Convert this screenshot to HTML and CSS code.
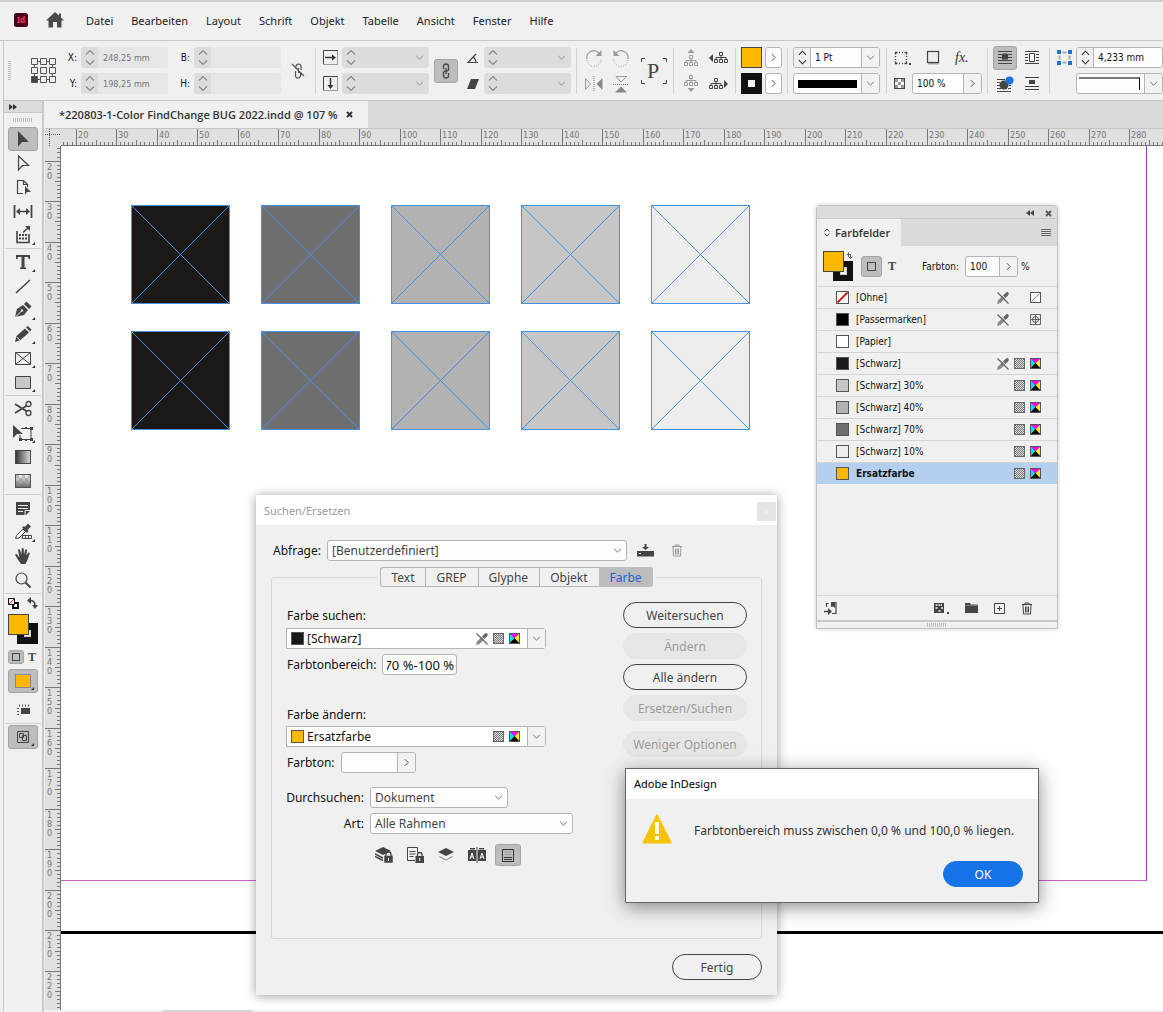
FILE: index.html
```html
<!DOCTYPE html>
<html lang="de">
  <head>
    <meta charset="UTF-8" />
    <title>InDesign</title>
    <link rel="stylesheet" href="styles.css" />
  </head>
  <body>
    <svg class="sprite">
      <symbol id="down" viewBox="0 0 10 6"><path d="M1 1l4 4 4-4" fill="none" stroke="currentColor" stroke-width="1.1" /></symbol>
      <symbol id="right" viewBox="0 0 6 10"><path d="M1 1l4 4-4 4" fill="none" stroke="currentColor" stroke-width="1.1" /></symbol>
      <symbol id="step" viewBox="0 0 17 21"><path d="M5 7.500l4-4 4 4M5 13.500l4 4 4-4" fill="none" stroke="currentColor" stroke-width="1.200" /></symbol>
      <symbol id="nopen" viewBox="0 0 12 12"><path d="M0 12l1-3.500L5.500 4l2.500 2.500L3.500 11z" fill="#888" /><path d="M6 3.500L9 .5q2-1 2.500.5 .8 1-.5 2.500L8.500 6z" fill="#666" /><path d="M.5.5l11 11" stroke="#666" stroke-width="1.300" /></symbol>
      <symbol id="tint" viewBox="0 0 11 11"><rect width="11" height="11" fill="#666" /><rect x="1" y="1" width="9" height="9" fill="url(#dots)" /></symbol>
      <symbol id="cmyk" viewBox="0 0 11 11"><rect width="11" height="11" fill="#555" /><path d="M1 1h9L5.500 5.500z" fill="#f0e" /><path d="M1 1v9l4.500-4.500z" fill="#0df" /><path d="M10 1v9L5.500 5.500z" fill="#fe1" /><path d="M1 10h9L5.500 5z" fill="#000" /></symbol>
      <symbol id="trash" viewBox="0 0 12 13"><path d="M1 2.500h10M4 2.500v-1.500h4v1.500M2 3l.5 9h7l.5-9M4.500 4.500v6M6 4.500v6M7.500 4.500v6" fill="none" stroke="currentColor" /></symbol>
      <symbol id="tree" viewBox="0 0 14 11"><path d="M5.500.5h3v3h-3zM.5 7.500h3v3h-3zM5.500 7.500h3v3h-3zM10.500 7.500h3v3h-3zM7 3.500v4M2 7.500v-2h10v2" fill="none" stroke="currentColor" /></symbol>
      <defs>
        <pattern id="dots" width="2" height="2" patternUnits="userSpaceOnUse"><rect width="2" height="2" fill="#ddd" /><path d="M0 0h1v1H0zM1 1h1v1H1z" fill="#777" /></pattern>
        <linearGradient id="fade"><stop offset="0" stop-color="#333" /><stop offset="1" stop-color="#ddd" /></linearGradient>
        <linearGradient id="fadeDown" x2="0" y2="1"><stop offset="0" stop-color="#fff" /><stop offset="1" stop-color="#666" /></linearGradient>
      </defs>
    </svg>

    <header class="menubar">
      <svg class="logo" width="14" height="14" viewBox="0 0 14 14"><rect width="14" height="14" rx="2.500" fill="#49021f" /><text x="3" y="10" class="logo-text">Id</text></svg>
      <svg class="home" width="18" height="16" viewBox="0 0 18 16"><path d="M9 0L0 8.500h2.500V15.500h4.500V10h4v5.500h4.500V8.500H18l-3-3V1.500h-2v2z" fill="#4b4b4b" /></svg>
      <nav class="menu">
        <a href="#">Datei</a><a href="#">Bearbeiten</a><a href="#">Layout</a><a href="#">Schrift</a><a href="#">Objekt</a><a href="#">Tabelle</a><a href="#">Ansicht</a><a href="#">Fenster</a><a href="#">Hilfe</a>
      </nav>
    </header>

    <div class="controlbar">
      <div class="grip-v"></div>
      <svg class="refpoint" width="26" height="26" viewBox="0 0 26 26"><path d="M3.500 3.500h18v18h-18z" fill="none" stroke="#555" /><g fill="#f0f0f0" stroke="#555"><path d="M.5.5h6v6h-6zM9.500.5h6v6h-6zM18.500.5h6v6h-6zM.5 9.500h6v6h-6zM9.500 9.500h6v6h-6zM18.500 9.500h6v6h-6zM9.500 18.500h6v6h-6zM18.500 18.500h6v6h-6z" /><path d="M.5 18.500h6v6h-6z" fill="#444" /></g></svg>

      <div class="pair pair-pos">
        <label for="posX">X:</label>
        <div class="field light"><svg class="step"><use href="#step" /></svg><input id="posX" value="248,25 mm" disabled /></div>
        <label for="posB">B:</label>
        <div class="field light"><svg class="step"><use href="#step" /></svg><input id="posB" disabled /></div>
        <label for="posY">Y:</label>
        <div class="field light"><svg class="step"><use href="#step" /></svg><input id="posY" value="198,25 mm" disabled /></div>
        <label for="posH">H:</label>
        <div class="field light"><svg class="step"><use href="#step" /></svg><input id="posH" disabled /></div>
      </div>
      <svg class="unlink" width="16" height="18" viewBox="0 0 16 18"><path d="M6 7V4.500a2.500 2.500 0 0 1 5 0V8M5.500 9v4.500a2.500 2.500 0 0 0 5 0V11M8.500 6v5M2 2l12 12" fill="none" stroke="#555" stroke-width="1.200" /></svg>
      <div class="sep"></div>

      <div class="pair pair-scale">
        <svg width="15" height="15" viewBox="0 0 15 15"><path d="M14.500.5H.5v14" fill="none" stroke="#444" /><path d="M14.500.5v14H.5" fill="none" stroke="#444" stroke-dasharray="1 1" /><path d="M2 7.500h9" stroke="#333" stroke-width="1.500" /><path d="M9 4.500l4 3-4 3z" fill="#333" /></svg>
        <div class="field off"><svg class="step"><use href="#step" /></svg><input aria-label="Skalierung X" disabled /><svg class="chev"><use href="#down" /></svg></div>
        <svg width="15" height="15" viewBox="0 0 15 15"><path d="M.5 14.500V.5h14" fill="none" stroke="#444" /><path d="M14.500.5v14H.5" fill="none" stroke="#444" stroke-dasharray="1 1" /><path d="M7.500 2v9" stroke="#333" stroke-width="1.500" /><path d="M4.500 9l3 4 3-4z" fill="#333" /></svg>
        <div class="field off"><svg class="step"><use href="#step" /></svg><input aria-label="Skalierung Y" disabled /><svg class="chev"><use href="#down" /></svg></div>
      </div>
      <button class="toggle link" aria-label="Verketten"><svg width="10" height="16" viewBox="0 0 10 16"><path d="M2.500 6V3.500a2.500 2.500 0 0 1 5 0V6.500a2 2 0 0 1-2.500 1.500M7.500 10v2.500a2.500 2.500 0 0 1-5 0V9.500A2 2 0 0 1 5 8M5 5v6" fill="none" stroke="#444" stroke-width="1.300" /></svg></button>

      <div class="pair pair-angle">
        <svg width="14" height="12" viewBox="0 0 14 12"><path d="M12 10.500H2L10 2M7 5q3 2 3 5.500" fill="none" stroke="#444" stroke-width="1.200" /></svg>
        <div class="field off"><svg class="step"><use href="#step" /></svg><input aria-label="Drehwinkel" disabled /><svg class="chev"><use href="#down" /></svg></div>
        <svg width="14" height="12" viewBox="0 0 14 12"><path d="M5 1h8L9 11H1z" fill="#444" /></svg>
        <div class="field off"><svg class="step"><use href="#step" /></svg><input aria-label="Scherwinkel" disabled /><svg class="chev"><use href="#down" /></svg></div>
      </div>
      <div class="sep"></div>

      <div class="pair pair-rotate">
        <svg width="18" height="18" viewBox="0 0 18 18"><path d="M2 10A7 7 0 0 1 14 4" fill="none" stroke="#999" stroke-width="1.200" /><path d="M16.500 1v6h-6z" fill="#999" /><path d="M2 11a7 7 0 0 0 14-1" fill="none" stroke="#999" stroke-dasharray="1 1.500" /></svg>
        <svg width="18" height="18" viewBox="0 0 18 18"><path d="M16 10A7 7 0 0 0 4 4" fill="none" stroke="#999" stroke-width="1.200" /><path d="M1.500 1v6h6z" fill="#999" /><path d="M16 11a7 7 0 0 1-14-1" fill="none" stroke="#999" stroke-dasharray="1 1.500" /></svg>
        <svg width="18" height="16" viewBox="0 0 18 16"><path d="M.5 2.500v11l5-5.500z" fill="none" stroke="#999" /><path d="M9 0v16" stroke="#777" stroke-dasharray="1 1" /><path d="M17.500 2v12l-6-6z" fill="#888" /></svg>
        <svg width="18" height="18" viewBox="0 0 18 18"><path d="M4 1.500h10.500L9 7z" fill="none" stroke="#999" /><path d="M1 9.500h16" stroke="#777" stroke-dasharray="1 1" /><path d="M3 17.500h12l-6-6z" fill="#888" /></svg>
      </div>
      <svg class="para" width="26" height="26" viewBox="0 0 26 26"><path d="M.5 4V.5H4M22 .5h3.500V4M.5 22v3.500H4M22 25.500h3.500V22" fill="none" stroke="#444" /><text x="6" y="20" class="para-text">P</text></svg>
      <div class="sep"></div>

      <div class="pair pair-tree">
        <svg class="dim" width="14" height="17" viewBox="0 0 14 17"><path d="M3.500 4L7 0l3.500 4z" fill="currentColor" /><use href="#tree" y="6" width="14" height="11" /></svg>
        <svg class="dark" width="19" height="12" viewBox="0 0 19 12"><path d="M4 2v8L0 6z" fill="currentColor" /><use href="#tree" x="5" width="14" height="11" /></svg>
        <svg class="dim" width="14" height="17" viewBox="0 0 14 17"><use href="#tree" width="14" height="11" /><path d="M3.500 13L7 17l3.500-4z" fill="currentColor" /></svg>
        <svg class="dark" width="19" height="12" viewBox="0 0 19 12"><use href="#tree" width="14" height="11" /><path d="M15 2v8l4-4z" fill="currentColor" /></svg>
      </div>
      <div class="sep"></div>

      <div class="pair pair-color">
        <div class="fillbox"></div><button class="small-btn" aria-label="Fläche"><svg class="right"><use href="#right" /></svg></button>
        <div class="strokebox"></div><button class="small-btn" aria-label="Kontur"><svg class="right"><use href="#right" /></svg></button>
      </div>
      <div class="sep"></div>

      <div class="pair pair-stroke">
        <div class="field on"><svg class="step"><use href="#step" /></svg><input aria-label="Konturstärke" value="1 Pt" /><span class="drop"><svg class="chev"><use href="#down" /></svg></span></div>
        <div class="field on"><span class="line-sample"><i></i></span><span class="drop"><svg class="chev"><use href="#down" /></svg></span></div>
      </div>
      <div class="sep"></div>

      <div class="pair pair-fx">
        <div class="fx-row">
          <svg width="17" height="14" viewBox="0 0 17 14"><path d="M5 1.500h1M8 1.500h1M5 12.500h1M8 12.500h1M1.500 5v1M1.500 8v1M12.500 5v1M12.500 8v1M1.500 3.500v-2h2M10.500 1.500h2v2M1.500 10.500v2h2M10.500 12.500h2v-2" fill="none" stroke="#444" stroke-width="1.500" /><path d="M15 12h2v2h-2z" fill="#444" /></svg>
          <svg width="14" height="15" viewBox="0 0 14 15"><path d="M2 13h11v1.500H2z" fill="#aaa" /><rect x="1.500" y="1.500" width="11" height="11" fill="#eee" stroke="#444" stroke-width="1.200" /></svg>
          <span class="fx">fx.</span>
        </div>
        <div class="fx-row">
          <svg width="11" height="11" viewBox="0 0 11 11"><rect x=".5" y=".5" width="10" height="10" fill="#fff" stroke="#444" /><path d="M1 1h3v3H1zM7 1h3v3H7zM4 4h3v3H4zM1 7h3v3H1zM7 7h3v3H7z" fill="#999" /></svg>
          <div class="field on"><input aria-label="Deckkraft" value="100 %" /><span class="drop"><svg class="right"><use href="#right" /></svg></span></div>
        </div>
      </div>
      <div class="sep"></div>

      <div class="pair pair-wrap">
        <button class="toggle" aria-label="Kein Umfließen"><svg width="14" height="13" viewBox="0 0 14 13"><path d="M0 .5h14M0 3.500h14M0 6.500h14M0 9.500h14M0 12.500h14" stroke="#444" /><path d="M5 2.500h4v1h1v5H4v-5h1z" fill="#444" /></svg></button>
        <svg width="14" height="13" viewBox="0 0 14 13"><path d="M0 .5h14M0 3.500h3M0 6.500h3M0 9.500h3M11 3.500h3M11 6.500h3M11 9.500h3M0 12.500h14" stroke="#444" /><path d="M4.500 2.500h5v8h-5z" fill="#fff" stroke="#444" /></svg>
        <svg width="17" height="16" viewBox="0 0 17 16"><path d="M0 3.500h8M0 6.500h3M0 9.500h3M0 12.500h4M12 9.500h2M11 12.500h3M0 15.500h14" stroke="#444" /><circle cx="7" cy="9" r="4.500" fill="#444" /><circle cx="12.500" cy="4.500" r="4" fill="#1473e6" /></svg>
        <svg width="14" height="13" viewBox="0 0 14 13"><path d="M0 .5h14M0 9.500h14M0 12.500h14" stroke="#444" /><path d="M4 3h6v4H4z" fill="#444" /></svg>
      </div>
      <div class="sep"></div>

      <div class="pair pair-corner">
        <svg width="15" height="15" viewBox="0 0 15 15"><path d="M5.500 2.500h4M5.500 12.500h4M2.500 5.500v4M12.500 5.500v4" stroke="#aaa" stroke-width="2" /><path d="M0 0h4v4H0zM11 0h4v4h-4zM0 11h4v4H0zM11 11h4v4h-4z" fill="#1d6fd0" /></svg>
        <div class="field on"><svg class="step"><use href="#step" /></svg><input aria-label="Eckengröße" value="4,233 mm" /></div>
        <span></span>
        <div class="field on"><span class="corner-sample"><i></i></span><span class="drop"><svg class="chev"><use href="#down" /></svg></span></div>
      </div>
    </div>

    <main class="workspace">
      <aside class="tools">
        <div class="tools-head"><svg width="8" height="6" viewBox="0 0 8 6"><path d="M0 0l4 3-4 3zM4 0l4 3-4 3z" fill="#333" /></svg></div>
        <div class="grip-h"></div>
        <button class="tool active" aria-label="Auswahl"><svg width="20" height="20" viewBox="0 0 20 20"><path d="M5 2v16l4-5h7z" fill="#444" /></svg></button>
        <button class="tool" aria-label="Direktauswahl"><svg width="20" height="20" viewBox="0 0 20 20"><path d="M5.500 3v14l4-4.500h6z" fill="none" stroke="#444" stroke-width="1.200" /></svg></button>
        <button class="tool" aria-label="Seite"><svg width="20" height="20" viewBox="0 0 20 20"><path d="M10 16.500H4.500v-13h6l4 4V10M10.500 3.500v4h4" fill="none" stroke="#444" stroke-width="1.200" /><path d="M12 9v9l2-3h4z" fill="#444" /></svg></button>
        <button class="tool" aria-label="Lücke"><svg width="20" height="20" viewBox="0 0 20 20"><path d="M1.500 4v13M18.500 4v13" stroke="#444" stroke-width="1.800" /><path d="M5 10.500h10" stroke="#444" stroke-width="1.500" /><path d="M3 10.500l4-3.500v7zM17 10.500L13 7v7z" fill="#444" /></svg></button>
        <button class="tool more" aria-label="Inhaltsaufnahme"><svg width="20" height="20" viewBox="0 0 20 20"><path d="M4 6v11.500h12V9" fill="none" stroke="#444" stroke-width="1.600" /><path d="M6 9h2v2H6zM9 9h2v2H9zM12 9h2v2h-2zM6 12.500h2v2H6zM9 12.500h2v2H9zM12 12.500h2v2h-2zM12 1h5v5z" fill="#444" /><path d="M10 7.500L15 3" stroke="#444" stroke-width="1.500" /></svg></button>
        <hr />
        <button class="tool more" aria-label="Text"><svg width="20" height="20" viewBox="0 0 20 20"><path d="M3 3h14v4h-1.500L15 5h-3.500v10.500H13V17H7v-1.500h1.500V5H5l-.5 2H3z" fill="#444" /></svg></button>
        <button class="tool" aria-label="Linie"><svg width="20" height="20" viewBox="0 0 20 20"><path d="M3 17L17 4" stroke="#444" stroke-width="1.500" /></svg></button>
        <button class="tool more" aria-label="Zeichenstift"><svg width="20" height="20" viewBox="0 0 20 20"><path d="M2 17l2-8 6-4 5 5-4 5z" fill="#444" /><path d="M11 4l2.500-2.500 5 5L16 9z" fill="#444" /><path d="M2.500 17l6-6" stroke="#eee" /><circle cx="9" cy="10.500" r="1.200" fill="#eee" /></svg></button>
        <button class="tool more" aria-label="Buntstift"><svg width="20" height="20" viewBox="0 0 20 20"><path d="M2 18l1.500-6L12 4.500l4 4L7.500 16zM13 3.500L15 2l3.500 3.500L17 7.500z" fill="#444" /><path d="M3.800 13l3 3" stroke="#eee" /></svg></button>
        <button class="tool more" aria-label="Rechteckrahmen"><svg width="20" height="20" viewBox="0 0 20 20"><path d="M2.500 4.500h15v12h-15zM2.500 4.500l15 12M17.500 4.500l-15 12" fill="none" stroke="#444" /></svg></button>
        <button class="tool more" aria-label="Rechteck"><svg width="20" height="20" viewBox="0 0 20 20"><path d="M2.500 4.500h15v12h-15z" fill="#c8c8c8" stroke="#444" /></svg></button>
        <hr />
        <button class="tool" aria-label="Schere"><svg width="20" height="20" viewBox="0 0 20 20"><path d="M2 5l12 7.500M2 14l12-7.500" stroke="#444" stroke-width="1.800" /><circle cx="15.500" cy="5" r="2.500" fill="none" stroke="#444" stroke-width="1.300" /><circle cx="15.500" cy="14" r="2.500" fill="none" stroke="#444" stroke-width="1.300" /></svg></button>
        <button class="tool more" aria-label="Frei transformieren"><svg width="20" height="20" viewBox="0 0 20 20"><path d="M8 5.500h10v11H7V12" fill="none" stroke="#444" /><path d="M0 2v13l4-4h6z" fill="#444" /><path d="M17 4h3v3h-3zM17 15h3v3h-3zM6 15h3v3H6zM12 4h2v1h-2zM12 17h2v1h-2z" fill="#444" /></svg></button>
        <button class="tool" aria-label="Verlaufsfarbfeld"><svg width="20" height="20" viewBox="0 0 20 20"><rect x="2.500" y="3.500" width="15" height="13" fill="url(#fade)" stroke="#444" /></svg></button>
        <button class="tool" aria-label="Weiche Verlaufskante"><svg width="20" height="20" viewBox="0 0 20 20"><rect x="2.500" y="3.500" width="15" height="13" fill="url(#fadeDown)" stroke="#555" /><path d="M3 4h3v3H3zM9 4h3v3H9zM15 4h2v3h-2zM6 7h3v3H6zM12 7h3v3h-3zM3 10h3v3H3zM9 10h3v3H9z" fill="#888" opacity=".5" /></svg></button>
        <hr />
        <button class="tool" aria-label="Notiz"><svg width="20" height="20" viewBox="0 0 20 20"><path d="M3 4h14v9l-4 4H3z" fill="#444" /><path d="M5 7.500h10M5 10.500h10M5 13.500h5M12 17v-4.500h5" stroke="#eee" fill="none" /></svg></button>
        <button class="tool more" aria-label="Pipette"><svg width="20" height="20" viewBox="0 0 20 20"><path d="M2.500 16.500l1-3L10 7l2.500 2.500L6 16z" fill="none" stroke="#444" /><path d="M9 5.500L11 4l1 1 3-3.500 3 3L14.500 8l1 1-1.500 2z" fill="#444" /><path d="M9.500 13.500h9v3h-9zM12.500 13.500v3M15.500 13.500v3" fill="#fff" stroke="#444" /></svg></button>
        <button class="tool" aria-label="Hand"><svg width="20" height="20" viewBox="0 0 20 20"><path d="M2 8.500q1.500-1 2.500.5l2 2.500L5 4q1.500-1.500 2.200.5l1.200 4L8.800 2.500q1.200-1.200 1.900 0l.3 6 1.300-5q1.400-.8 1.700.6l-.6 5.400 2-3q1.600-.4 1.300 1L14.500 14l-2 4H8l-3.500-5z" fill="#444" /></svg></button>
        <button class="tool" aria-label="Zoom"><svg width="20" height="20" viewBox="0 0 20 20"><circle cx="8.500" cy="8.500" r="5.500" fill="none" stroke="#444" stroke-width="1.200" /><path d="M12.500 12.500l5 5" stroke="#444" stroke-width="2" /></svg></button>
        <hr />
        <div class="swap-row">
          <svg width="11" height="11" viewBox="0 0 11 11"><path d="M5 5h5v5H5z" fill="#fff" stroke="#000" stroke-width="1.800" /><path d="M.5.5h6v6h-6z" fill="#fff" stroke="#000" /><path d="M1 6l5-5" stroke="#e02020" /></svg>
          <svg width="11" height="12" viewBox="0 0 11 12"><path d="M3 3.500q5 0 5 5" fill="none" stroke="#444" stroke-width="1.500" /><path d="M4 0v7L0 3.500zM5 8h6l-3 4z" fill="#444" /></svg>
        </div>
        <svg class="fillstroke" width="30" height="30" viewBox="0 0 30 30"><rect x="9" y="9" width="21" height="21" fill="#111" /><rect x="16.500" y="16.500" width="6" height="6" fill="#f0f0f0" stroke="#ccc" /><rect x=".5" y=".5" width="20" height="20" fill="#ffb800" stroke="#444" /></svg>
        <div class="mode-row">
          <button class="toggle mode" aria-label="Container"><svg width="8" height="8" viewBox="0 0 8 8"><rect x=".5" y=".5" width="7" height="7" fill="none" stroke="#444" /></svg></button>
          <span class="serif-t">T</span>
        </div>
        <button class="tool active more" aria-label="Farbe anwenden"><svg width="20" height="20" viewBox="0 0 20 20"><rect x="2.500" y="3.500" width="15" height="13" fill="#ffb800" stroke="#888" /></svg></button>
        <button class="tool screen" aria-label="Ansicht"><svg width="20" height="20" viewBox="0 0 20 20"><path d="M8 8h9v6H8z" fill="#444" /><path d="M6 5.500h11M5 8v7" stroke="#555" stroke-width="2" stroke-dasharray="1 2" /></svg></button>
        <hr />
        <button class="tool active more" aria-label="Bildschirmmodus"><svg width="20" height="20" viewBox="0 0 20 20"><path d="M4.500 4.500h11v11h-11z" fill="none" stroke="#444" /><path d="M6.500 6.500h4v4h-4zM9.500 8.500h4v5h-4z" fill="none" stroke="#444" /></svg></button>
      </aside>

      <section class="document">
        <div class="tabstrip">
          <div class="doc-tab">*220803-1-Color FindChange BUG 2022.indd @ 107 % <button class="tab-close" aria-label="Schließen"><svg width="7" height="7" viewBox="0 0 7 7"><path d="M1 1l5 5M6 1L1 6" stroke="#333" stroke-width="2" /></svg></button></div>
        </div>
        <div class="ruled">
          <svg class="ruler-origin" width="16" height="17" viewBox="0 0 16 17"><path d="M4.500 0v17M0 5.500h16" stroke="#555" stroke-dasharray="1 1" /></svg>
          <svg class="ruler-x" id="rulerX"></svg>
          <svg class="ruler-y" id="rulerY"></svg>
          <div class="canvas">
            <div class="page-margin"></div>
            <div class="page-edge"></div>
            <div class="frames" id="frames"></div>
          </div>
        </div>
        <div class="scroll-x"><i></i></div>
      </section>
    </main>

    <section class="panel">
      <div class="panel-head">
        <svg width="8" height="6" viewBox="0 0 8 6"><path d="M4 0L0 3l4 3zM8 0L4 3l4 3z" fill="#444" /></svg>
        <svg width="7" height="7" viewBox="0 0 7 7"><path d="M1 1l5 5M6 1L1 6" stroke="#555" stroke-width="1.800" /></svg>
      </div>
      <div class="panel-tabs">
        <h2><svg width="6" height="9" viewBox="0 0 6 9"><path d="M.5 3.500L3 1l2.500 2.500M.5 5.500L3 8l2.500-2.500" fill="none" stroke="#444" /></svg>Farbfelder</h2>
        <svg class="burger" width="10" height="8" viewBox="0 0 10 8"><path d="M0 .5h10M0 2.500h10M0 4.500h10M0 6.500h10" stroke="#666" /></svg>
      </div>
      <div class="panel-tint">
        <svg width="30" height="30" viewBox="0 0 30 30"><rect x="10" y="10" width="20" height="20" fill="#111" /><rect x="17.500" y="16.500" width="6" height="7" fill="#f0f0f0" stroke="#ccc" /><rect x=".5" y=".5" width="20" height="20" fill="#ffb800" stroke="#444" /><path d="M24 3.500h3.500V7M25.500 1.500v4M25.500 5.500l2 2 2-2" fill="none" stroke="#555" /></svg>
        <button class="toggle mode-lg" aria-label="Container"><svg width="9" height="9" viewBox="0 0 9 9"><rect x=".5" y=".5" width="8" height="8" fill="none" stroke="#444" /></svg></button>
        <span class="serif-t">T</span>
        <label for="tint">Farbton:</label>
        <div class="field on tint-field"><input id="tint" value="100" /><span class="drop"><svg class="right"><use href="#right" /></svg></span></div>
        <span class="percent">%</span>
      </div>
      <ul class="swatches">
        <li><svg class="chip" viewBox="0 0 13 13"><rect x=".5" y=".5" width="12" height="12" fill="#fff" stroke="#555" /><path d="M1.500 11.500l10-10" stroke="#d01010" stroke-width="1.800" /></svg><span>[Ohne]</span><svg class="i12 gapped"><use href="#nopen" /></svg><svg class="i11" viewBox="0 0 11 11"><rect x=".5" y=".5" width="10" height="10" fill="#fff" stroke="#555" /><path d="M1.500 9.500l8-8" stroke="#c66" /></svg></li>
        <li><i class="chip registration"></i><span>[Passermarken]</span><svg class="i12 gapped"><use href="#nopen" /></svg><svg class="i11" viewBox="0 0 11 11"><path d="M.5.5h10v10H.5zM5.500 1v9M1 5.500h9" fill="none" stroke="#666" /><circle cx="5.500" cy="5.500" r="3" fill="none" stroke="#555" /></svg></li>
        <li><i class="chip paper"></i><span>[Papier]</span></li>
        <li><i class="chip black"></i><span>[Schwarz]</span><svg class="i12"><use href="#nopen" /></svg><svg class="i11"><use href="#tint" /></svg><svg class="i11"><use href="#cmyk" /></svg></li>
        <li><i class="chip k30"></i><span>[Schwarz] 30%</span><svg class="i11"><use href="#tint" /></svg><svg class="i11"><use href="#cmyk" /></svg></li>
        <li><i class="chip k40"></i><span>[Schwarz] 40%</span><svg class="i11"><use href="#tint" /></svg><svg class="i11"><use href="#cmyk" /></svg></li>
        <li><i class="chip k70"></i><span>[Schwarz] 70%</span><svg class="i11"><use href="#tint" /></svg><svg class="i11"><use href="#cmyk" /></svg></li>
        <li><i class="chip k10"></i><span>[Schwarz] 10%</span><svg class="i11"><use href="#tint" /></svg><svg class="i11"><use href="#cmyk" /></svg></li>
        <li class="selected"><i class="chip orange"></i><span>Ersatzfarbe</span><svg class="i11"><use href="#tint" /></svg><svg class="i11"><use href="#cmyk" /></svg></li>
      </ul>
      <div class="panel-foot">
        <svg class="push" width="13" height="13" viewBox="0 0 13 13"><path d="M2.500 5V1.500h2M7 .5h5v11H8" fill="none" stroke="#444" stroke-width="1.200" /><path d="M7 1h4v5L9 4.500 7 5zM4 6l4 3.500L4 13z" fill="#444" /><path d="M0 9.500h5" stroke="#444" stroke-width="1.500" /></svg>
        <svg width="15" height="12" viewBox="0 0 15 12"><path d="M0 1h10v10H0z" fill="#444" /><path d="M1.500 3h2M4.500 3h2M1.500 6h2M7 6h2M4.500 9h2M7 3h1" stroke="#eee" stroke-width="1.500" /><path d="M13 10h2v2h-2z" fill="#444" /></svg>
        <svg width="13" height="10" viewBox="0 0 13 10"><path d="M0 0h5l1 1.500h7V10H0z" fill="#444" /><path d="M0 2.500h13" stroke="#bbb" stroke-width=".5" /></svg>
        <svg width="11" height="11" viewBox="0 0 11 11"><path d="M.5.5h10v10H.5zM5.500 3v5M3 5.500h5" fill="none" stroke="#444" /></svg>
        <svg class="dark" width="12" height="13"><use href="#trash" /></svg>
      </div>
      <div class="panel-resize"><i></i></div>
    </section>

    <section class="dialog">
      <div class="dialog-title">Suchen/Ersetzen<button class="dialog-close" aria-label="Schließen"><svg width="7" height="7" viewBox="0 0 7 7"><path d="M1 1l5 5M6 1L1 6" stroke="#f5f5f5" /></svg></button></div>
      <form class="dialog-body">
        <div class="query">
          <label for="query">Abfrage:</label>
          <div class="select w-query"><select id="query"><option>[Benutzerdefiniert]</option></select><svg class="chev"><use href="#down" /></svg></div>
          <svg class="save" width="17" height="13" viewBox="0 0 17 13"><path d="M0 7h17v5.500H0zM7.500 0h2v3H12L8.500 6 5 3h2.500z" fill="#444" /><path d="M2 9.500h2" stroke="#fff" /></svg>
          <svg class="dim" width="12" height="13"><use href="#trash" /></svg>
        </div>
        <fieldset>
          <legend class="tabs"><button type="button">Text</button><button type="button">GREP</button><button type="button">Glyphe</button><button type="button">Objekt</button><button type="button" class="current">Farbe</button></legend>
          <div class="columns">
            <div class="criteria">
              <label class="heading" for="findColor">Farbe suchen:</label>
              <div class="combo"><i class="chip black"></i><select id="findColor"><option>[Schwarz]</option></select><svg class="i12"><use href="#nopen" /></svg><svg class="i11"><use href="#tint" /></svg><svg class="i11"><use href="#cmyk" /></svg><span class="drop"><svg class="chev"><use href="#down" /></svg></span></div>
              <div class="row"><label for="range">Farbtonbereich:</label><input id="range" class="range" value="70 %-100 %" /></div>
              <label class="heading change" for="changeColor">Farbe ändern:</label>
              <div class="combo"><i class="chip orange"></i><select id="changeColor"><option>Ersatzfarbe</option></select><svg class="i11"><use href="#tint" /></svg><svg class="i11"><use href="#cmyk" /></svg><span class="drop"><svg class="chev"><use href="#down" /></svg></span></div>
              <div class="row"><label for="changeTint">Farbton:</label><div class="field on change-tint"><input id="changeTint" /><span class="drop"><svg class="right"><use href="#right" /></svg></span></div></div>
              <div class="scope">
                <label for="scope">Durchsuchen:</label>
                <div class="select w-scope"><select id="scope"><option>Dokument</option></select><svg class="chev"><use href="#down" /></svg></div>
                <label for="kind">Art:</label>
                <div class="select w-kind"><select id="kind"><option>Alle Rahmen</option></select><svg class="chev"><use href="#down" /></svg></div>
              </div>
              <div class="scope-icons">
                <svg width="18" height="16" viewBox="0 0 18 16"><path d="M8 0l8 4-8 4-8-4z" fill="#444" /><path d="M0 7l8 4M0 9.500l8 4" stroke="#444" stroke-width="1.500" fill="none" /><path d="M9 8.500h9V16H9z" fill="#444" stroke="#eee" stroke-width=".5" /><path d="M11 9V7q0-2 2.500-2T16 7v2" fill="none" stroke="#444" stroke-width="1.300" /><path d="M13.500 11v3" stroke="#eee" /></svg>
                <svg width="17" height="16" viewBox="0 0 17 16"><path d="M8 13.500H.5V.5h10v5M2.500 4.500h6M2.500 7h6M2.500 9.500h4" fill="none" stroke="#444" /><path d="M8.500 9h8.500v7H8.500z" fill="#444" /><path d="M10.500 9V7.500q0-2 2.200-2T15 7.500V9" fill="none" stroke="#444" stroke-width="1.300" /><path d="M12.700 11v3" stroke="#eee" /></svg>
                <svg width="16" height="14" viewBox="0 0 16 14"><path d="M8 0l8 4-8 4-8-4z" fill="#444" /><path d="M1.500 8.500L8 12l6.500-3.500" fill="none" stroke="#999" stroke-width="1.200" /></svg>
                <svg width="18" height="16" viewBox="0 0 18 16"><path d="M0 3h8v11H0zM10 3h8v11h-8zM2 1h5v1.500H2zM11 1h5v1.500h-5z" fill="#444" /><path d="M9 0v16" stroke="#444" /><path d="M2 12l2-6 2 6M2.700 10h2.600M12 12l2-6 2 6M12.700 10h2.600" fill="none" stroke="#fff" /></svg>
                <button type="button" class="toggle footnote" aria-label="Fußnoten"><svg width="12" height="13" viewBox="0 0 12 13"><path d="M.5.5h11v12H.5zM2 8.500h8M2 10.500h8" fill="none" stroke="#333" /><path d="M2.500 3h7M2.500 5.500h7" stroke="#999" /></svg></button>
              </div>
            </div>
            <div class="actions">
              <button type="button" class="pill">Weitersuchen</button>
              <button type="button" class="pill" disabled>Ändern</button>
              <button type="button" class="pill">Alle ändern</button>
              <button type="button" class="pill" disabled>Ersetzen/Suchen</button>
              <button type="button" class="pill fewer" disabled>Weniger Optionen</button>
            </div>
          </div>
        </fieldset>
        <button type="button" class="pill done">Fertig</button>
      </form>
    </section>

    <section class="alert">
      <div class="alert-title">Adobe InDesign</div>
      <div class="alert-body">
        <svg width="30" height="30" viewBox="0 0 30 30"><path d="M15 1.500L28.500 28.500h-27z" fill="#f5c400" stroke="#f5c400" stroke-width="2" stroke-linejoin="round" /><path d="M13 8h4v12h-4zM13 22h4v4h-4z" fill="#fffbe8" /></svg>
        <p>Farbtonbereich muss zwischen 0,0 % und 100,0 % liegen.</p>
      </div>
      <button class="pill ok">OK</button>
    </section>

    <script>
      const PX_PER_MM = 4.052;
      const START = 14.6;

      // one tick per millimetre, label every 10 mm
      function drawRuler(id, length, thick, vertical) {
        let out = "";
        for (let mm = 17; ; mm++) {
          const p = Math.round(START + (mm - 20) * PX_PER_MM);
          if (p > length) break;
          const size = mm % 10 === 0 ? thick : mm % 5 === 0 ? 5 : 3;
          out += vertical
            ? `<rect x="${thick - size}" y="${p}" width="${size}" height="1" />`
            : `<rect x="${p}" y="${thick - size}" width="1" height="${size}" />`;
          if (mm % 10) continue;
          if (vertical) {
            String(mm).split("").forEach((digit, i) => {
              out += `<text x="2" y="${p + 9 + i * 9}">${digit}</text>`;
            });
          } else {
            out += `<text x="${p + 2}" y="9">${mm}</text>`;
          }
        }
        document.getElementById(id).innerHTML = out;
      }
      const rx = document.getElementById("rulerX");
      const ry = document.getElementById("rulerY");
      drawRuler("rulerX", rx.clientWidth, 16, false);
      drawRuler("rulerY", ry.clientHeight, 15, true);

      const shades = ["black", "k70", "k40", "k30", "k10"];
      document.getElementById("frames").innerHTML = [...shades, ...shades]
        .map((s) => `<svg class="frame ${s}" viewBox="0 0 99 99"><path d="M.5.5h98v98H.5zM.5.5l98 98M98.500.5l-98 98" /></svg>`)
        .join("");

      const range = document.getElementById("range");
      range.scrollLeft = range.scrollWidth;
    </script>
  </body>
</html>
```

FILE: styles.css
```css
* {
  box-sizing: border-box;
}

body {
  margin: 0;
  height: 100vh;
  display: flex;
  flex-direction: column;
  overflow: hidden;
  position: relative;
  background: #f0f0f0;
  color: #111;
  font: 12px "Noto Sans", sans-serif;
}

button,
input,
select {
  font: inherit;
  color: inherit;
  margin: 0;
  padding: 0;
  border: none;
  background: none;
  outline: none;
  min-width: 0;
}

svg {
  display: block;
  flex: none;
}

.sprite {
  position: absolute;
  width: 0;
  height: 0;
}

.dim {
  color: #999;
}

.dark {
  color: #444;
}

.chev {
  width: 9px;
  height: 5px;
  color: #666;
}

.right {
  width: 5px;
  height: 9px;
  color: #444;
}

.i11 {
  width: 11px;
  height: 11px;
}

.i12 {
  width: 12px;
  height: 12px;
}

/* menu */
.menubar {
  display: flex;
  align-items: center;
  height: 41px;
  flex: none;
  padding-left: 14px;
  border-bottom: 1px solid #c8c8c8;
  box-shadow: inset 0 2px #d0d0d0;
}

.logo-text {
  font: bold 8px "Noto Sans", sans-serif;
  fill: #ff3366;
}

.home {
  margin-left: 18px;
}

.menu {
  display: flex;
  gap: 18px;
  margin-left: 22px;
}

.menu a {
  color: #222;
  text-decoration: none;
  font-size: 11px;
}

/* control bar */
.controlbar {
  display: flex;
  flex: none;
  align-items: center;
  height: 60px;
  margin-left: 3px;
  padding-left: 4px;
  border-left: 1px solid #c8c8c8;
  border-bottom: 1px solid #c4c4c4;
  overflow: hidden;
  font: 10px "DejaVu Sans Condensed", "DejaVu Sans", sans-serif;
}

.controlbar > * {
  flex: none;
}

.grip-v {
  width: 3px;
  height: 19px;
  background: repeating-linear-gradient(#bbb 0 1px, transparent 1px 2px);
}

.refpoint {
  margin-left: 20px;
}

.sep {
  width: 1px;
  height: 46px;
  background: #d4d4d4;
}

.pair {
  display: grid;
  grid-template-rows: 21px 21px;
  gap: 5px 4px;
  align-items: center;
  justify-items: center;
}

.pair-pos {
  grid-template-columns: 20px 87px 18px 87px;
}

.pair-pos label {
  justify-self: end;
}

.unlink {
  margin: 0 9px;
}

.pair-scale {
  grid-template-columns: 15px 87px;
  margin-left: 7px;
}

.link {
  margin-left: 5px;
}

.pair-angle {
  grid-template-columns: 14px 87px;
  margin: 0 5px 0 8px;
}

.pair-rotate {
  grid-template-columns: 18px 18px;
  column-gap: 9px;
  margin: 0 11px 0 8px;
}

.para {
  margin-right: 6px;
}

.para-text {
  font: 22px "Liberation Serif", serif;
  fill: #444;
}

.pair-tree {
  grid-template-columns: 15px 20px;
  column-gap: 10px;
  margin: 0 7px 0 9px;
}

.pair-color {
  grid-template-columns: 21px 17px;
  column-gap: 3px;
  margin: 0 5px;
}

.pair-stroke {
  grid-template-columns: 87px;
  margin: 0 6px 0 5px;
}

.pair-fx {
  grid-template-columns: 88px;
  margin: 0 5px 0 7px;
}

.pair-wrap {
  grid-template-columns: 24px 24px;
  column-gap: 3px;
  margin: 0 5px;
}

.pair-corner {
  grid-template-columns: 15px 87px;
  margin-left: 7px;
}

.field {
  display: flex;
  align-items: center;
  width: 100%;
  height: 21px;
  border-radius: 3px;
  overflow: hidden;
}

.field input {
  flex: 1;
  width: 0;
  height: 100%;
  padding-left: 4px;
}

.field .step {
  width: 17px;
  height: 21px;
  color: #888;
}

.field .chev {
  margin-right: 5px;
  color: #888;
}

.light {
  background: #e6e6e6;
  color: #777;
}

.light input {
  padding-left: 5px;
  font-size: 9px;
}

.light .step {
  background: #dcdcdc;
}

.off {
  background: #dcdcdc;
}

.on {
  border: 1px solid #b4b4b4;
  background: #fdfdfd;
}

.on .step {
  height: 19px;
  background: #f0f0f0;
  border-right: 1px solid #b4b4b4;
  color: #333;
}

.drop {
  display: flex;
  align-items: center;
  justify-content: center;
  flex: none;
  width: 18px;
  height: 100%;
  background: #f2f2f2;
  border-left: 1px solid #b4b4b4;
}

.drop .chev {
  margin: 0;
  color: #666;
}

.small-btn {
  display: flex;
  align-items: center;
  justify-content: center;
  width: 17px;
  height: 21px;
  background: #fdfdfd;
  border: 1px solid #b4b4b4;
  border-radius: 3px;
}

.fillbox {
  width: 21px;
  height: 21px;
  background: #ffb800;
  border: 1px solid #444;
}

.strokebox {
  width: 21px;
  height: 21px;
  background: #f0f0f0;
  border: 7px solid #111;
}

.line-sample {
  flex: 1;
  padding: 0 4px;
}

.line-sample i {
  display: block;
  height: 8px;
  background: #000;
}

.corner-sample {
  flex: 1;
  height: 100%;
  padding: 3px 4px 3px 2px;
}

.corner-sample i {
  display: block;
  height: 100%;
  border-top: 2px solid #777;
  border-right: 1px solid #000;
}

.fx-row {
  display: flex;
  align-items: center;
  justify-content: space-between;
  width: 100%;
}

.fx-row .field {
  width: 70px;
}

.fx {
  width: 27px;
  font: italic 14px "Liberation Serif", serif;
  color: #333;
}

.toggle {
  display: flex;
  align-items: center;
  justify-content: center;
  width: 24px;
  height: 24px;
  background: #bdbdbd;
  border: 1px solid #a4a4a4;
  border-radius: 3px;
}

/* tools */
.workspace {
  display: flex;
  flex: 1;
  min-height: 0;
  margin-left: 3px;
}

.tools {
  display: flex;
  flex-direction: column;
  flex: none;
  width: 42px;
  padding: 0 7px 0 4px;
  border-left: 1px solid #c8c8c8;
  background: linear-gradient(90deg, transparent 38px, #c8c8c8 38px 40px, transparent 40px);
}

.tools-head {
  display: flex;
  align-items: center;
  height: 12px;
  margin: 0 -4px;
  padding-left: 5px;
  background: #dcdcdc;
  border-bottom: 1px solid #c8c8c8;
}

.grip-h {
  width: 20px;
  height: 4px;
  margin: 5px auto;
  background: repeating-linear-gradient(90deg, #bbb 0 1px, transparent 1px 2px);
}

.tool {
  position: relative;
  display: flex;
  align-items: center;
  justify-content: center;
  flex: none;
  width: 30px;
  height: 24px;
}

.active {
  background: #bdbdbd;
  border: 1px solid #a4a4a4;
  border-radius: 3px;
}

.more::after {
  content: "";
  position: absolute;
  right: 3px;
  bottom: 2px;
  border-left: 3px solid transparent;
  border-bottom: 3px solid #333;
}

.tools hr {
  width: 36px;
  height: 1px;
  margin: 1px -3px;
  border: none;
  background: #d0d0d0;
}

.swap-row {
  display: flex;
  justify-content: space-between;
  align-items: center;
  height: 16px;
}

.fillstroke {
  margin-top: 3px;
}

.mode-row {
  display: flex;
  align-items: center;
  gap: 4px;
  margin: 6px 0 5px;
}

.mode {
  width: 16px;
  height: 14px;
}

.serif-t {
  font: bold 12px/14px "Liberation Serif", serif;
  color: #444;
}

.screen {
  margin-top: 5px;
}

/* document */
.document {
  display: flex;
  flex-direction: column;
  flex: 1;
  min-width: 0;
}

.tabstrip {
  display: flex;
  flex: none;
  height: 28px;
  background: #dadada;
  border-bottom: 1px solid #c4c4c4;
}

.doc-tab {
  display: flex;
  align-items: center;
  gap: 8px;
  padding: 0 15px 0 14px;
  background: #f0f0f0;
  color: #333;
  font: 600 11px "Open Sans", sans-serif;
}

.ruled {
  display: grid;
  grid-template: 17px 1fr / 16px 1fr;
  flex: 1;
  min-height: 0;
}

.ruler-origin,
.ruler-x,
.ruler-y {
  background: #e0e0e0;
}

.ruler-x {
  width: 100%;
  height: 17px;
  border-bottom: 1px solid #777;
}

.ruler-y {
  width: 16px;
  height: 100%;
  border-right: 1px solid #777;
}

.ruler-x text,
.ruler-y text {
  font: 9px "DejaVu Sans Condensed", sans-serif;
  fill: #777;
}

.ruler-x rect,
.ruler-y rect {
  fill: #777;
}

.canvas {
  position: relative;
  overflow: hidden;
  background: #fff;
}

.page-margin {
  position: absolute;
  left: 0;
  top: 0;
  width: 1086px;
  height: 735px;
  border-right: 1px solid #9440c8;
  border-bottom: 1px solid #c860c8;
}

.page-edge {
  position: absolute;
  left: 0;
  right: 0;
  top: 785px;
  height: 3px;
  background: #000;
}

.frames {
  display: grid;
  grid-template-columns: repeat(5, 99px);
  gap: 27px 31px;
  padding: 59px 0 0 70px;
}

.frame {
  width: 99px;
  height: 99px;
  fill: none;
  stroke: #4a90e2;
}

.scroll-x {
  flex: none;
  height: 2px;
  background: #f0f0f0;
}

.scroll-x i {
  display: block;
  width: 90px;
  height: 2px;
  margin-left: 117px;
  background: #d4d4d4;
}

.black {
  background: #1a1918;
}

.k70 {
  background: #706f6f;
}

.k40 {
  background: #b2b2b2;
}

.k30 {
  background: #c6c6c6;
}

.k10 {
  background: #ededed;
}

.orange {
  background: #ffb800;
}

.registration {
  background: #000;
}

.paper {
  background: #fff;
}

.chip {
  flex: none;
  width: 13px;
  height: 13px;
}

i.chip {
  border: 1px solid #555;
}

/* swatches panel */
.panel {
  position: absolute;
  left: 816px;
  top: 205px;
  width: 242px;
  background: #f0f0f0;
  border: 1px solid #c0c0c0;
  border-radius: 4px 4px 0 0;
  box-shadow: 0 0 4px rgba(0, 0, 0, 0.2);
  font: 10px "DejaVu Sans Condensed", "DejaVu Sans", sans-serif;
}

.panel-head {
  display: flex;
  align-items: center;
  justify-content: flex-end;
  gap: 11px;
  height: 13px;
  padding: 2px 5px 0 0;
  background: #dcdcdc;
  border-bottom: 1px solid #c8c8c8;
}

.panel-tabs {
  display: flex;
  align-items: center;
  height: 27px;
  background: linear-gradient(90deg, #f0f0f0 84px, #dadada 84px);
}

.panel-tabs h2 {
  display: flex;
  align-items: center;
  gap: 5px;
  width: 84px;
  margin: 0;
  padding-left: 7px;
  color: #333;
  font: 600 11px "Open Sans", sans-serif;
}

.burger {
  margin: 0 6px 0 auto;
}

.panel-tint {
  display: flex;
  align-items: center;
  height: 40px;
  padding-left: 6px;
}

.mode-lg {
  width: 21px;
  height: 21px;
  margin: 0 6px 0 8px;
}

.panel-tint label {
  margin: 0 6px 0 auto;
}

.tint-field {
  width: 53px;
}

.percent {
  width: 39px;
  padding-left: 3px;
}

.swatches {
  height: 310px;
  margin: 0;
  padding: 0;
  list-style: none;
  border-bottom: 1px solid #d4d4d4;
}

.swatches li {
  display: flex;
  align-items: center;
  gap: 5px;
  height: 22px;
  padding: 0 16px 0 19px;
  border-top: 1px solid #d4d4d4;
}

.swatches span {
  flex: 1;
  padding-left: 2px;
}

.swatches .gapped {
  margin-right: 16px;
}

.swatches .selected {
  background: #b5d0ee;
  font-weight: bold;
}

.panel-foot {
  display: flex;
  align-items: center;
  gap: 16px;
  height: 24px;
  padding: 0 24px 0 7px;
}

.push {
  margin-right: auto;
}

.panel-resize {
  height: 8px;
  padding-top: 1px;
  border-top: 2px solid #c8c8c8;
}

.panel-resize i {
  display: block;
  width: 20px;
  height: 4px;
  margin: 0 auto;
  background: repeating-linear-gradient(90deg, #bbb 0 1px, transparent 1px 2px);
}

/* find/change dialog */
.dialog {
  position: absolute;
  left: 256px;
  top: 495px;
  width: 521px;
  background: #f0f0f0;
  box-shadow: 0 1px 10px rgba(0, 0, 0, 0.4);
}

.dialog-title {
  display: flex;
  align-items: center;
  justify-content: space-between;
  height: 30px;
  padding: 0 1px 0 8px;
  background: #fff;
  color: #999;
  font-size: 11px;
}

.dialog-close {
  display: flex;
  align-items: center;
  justify-content: center;
  width: 19px;
  height: 19px;
  margin-top: 3px;
  background: #e4e4e4;
}

.dialog-body {
  display: flex;
  flex-direction: column;
  padding: 15px;
}

.query {
  display: flex;
  align-items: center;
  padding-left: 2px;
  margin-bottom: 6px;
}

.query label {
  width: 54px;
}

.save {
  margin: 0 17px 0 10px;
}

.select {
  position: relative;
  display: flex;
  align-items: center;
  height: 21px;
  background: #fdfdfd;
  border: 1px solid #b4b4b4;
  border-radius: 3px;
  color: #444;
}

.select select {
  appearance: none;
  flex: 1;
  height: 19px;
  padding-left: 4px;
}

.select .chev {
  margin-right: 4px;
  pointer-events: none;
}

.w-query {
  width: 300px;
}

.w-scope {
  width: 138px;
}

.w-kind {
  width: 203px;
}

fieldset {
  margin: 0;
  padding: 15px 14px 72px 14px;
  border: 1px solid #d8d8d8;
  border-radius: 3px;
}

.tabs {
  display: flex;
  margin: 0 auto;
  padding: 0 3px;
}

.tabs button {
  height: 20px;
  padding: 0 11px 0 10px;
  border: 1px solid #b4b4b4;
  border-right: none;
  color: #444;
}

.tabs button:first-child {
  border-radius: 3px 0 0 3px;
}

.tabs .current {
  background: #bdbdbd;
  border-color: #bdbdbd;
  border-radius: 0 3px 3px 0;
  color: #1466d0;
}

.columns {
  display: flex;
  justify-content: space-between;
}

.criteria {
  width: 290px;
  padding-top: 3px;
}

.heading {
  display: block;
  padding-left: 1px;
  margin-bottom: 1px;
  line-height: 22px;
}

.change {
  margin: 29px 0 0;
}

.combo {
  display: flex;
  align-items: center;
  gap: 5px;
  width: 260px;
  height: 21px;
  padding-left: 4px;
  background: #fff;
  border: 1px solid #b4b4b4;
  border-radius: 0 3px 3px 0;
}

.combo select {
  appearance: none;
  flex: 1;
  margin-left: -2px;
}

.combo .drop {
  margin-left: 2px;
}

.row {
  display: flex;
  align-items: center;
  gap: 6px;
  margin-top: 5px;
  padding-left: 1px;
}

.range {
  width: 75px;
  height: 21px;
  padding: 0 2px 0 4px;
  background: #fdfdfd;
  border: 1px solid #b4b4b4;
  border-radius: 3px;
  font-size: 13px;
}

.change-tint {
  width: 75px;
}

.scope {
  display: grid;
  grid-template-columns: 78px 1fr;
  gap: 5px 6px;
  align-items: center;
  margin-top: 14px;
}

.scope label {
  justify-self: end;
}

.scope-icons {
  display: flex;
  align-items: center;
  gap: 14px;
  margin-top: 10px;
  padding-left: 89px;
}

.footnote {
  width: 26px;
  height: 22px;
  margin-left: -5px;
}

.actions {
  display: flex;
  flex-direction: column;
  gap: 5px;
  width: 124px;
}

.pill {
  height: 26px;
  background: transparent;
  border: 1px solid #444;
  border-radius: 13px;
  color: #444;
}

.pill:disabled {
  background: #e6e6e6;
  border-color: #e6e6e6;
  color: #999;
}

.fewer {
  margin-top: 5px;
}

.done {
  align-self: flex-end;
  width: 90px;
  margin-top: 15px;
}

/* alert */
.alert {
  position: absolute;
  left: 625px;
  top: 768px;
  display: flex;
  flex-direction: column;
  width: 414px;
  height: 135px;
  background: #f0f0f0;
  border: 1px solid #666;
  box-shadow: 0 4px 18px rgba(0, 0, 0, 0.45);
}

.alert-title {
  padding: 0 8px;
  background: #fff;
  color: #000;
  font-size: 11px;
  line-height: 30px;
}

.alert-body {
  display: flex;
  align-items: center;
  gap: 22px;
  padding: 15px 0 0 16px;
  color: #333;
}

.alert-body p {
  margin: 2px 0 0;
}

.ok {
  align-self: flex-end;
  width: 80px;
  margin: 17px 15px 0;
  background: #1473e6;
  border-color: #1473e6;
  color: #fff;
}
```
